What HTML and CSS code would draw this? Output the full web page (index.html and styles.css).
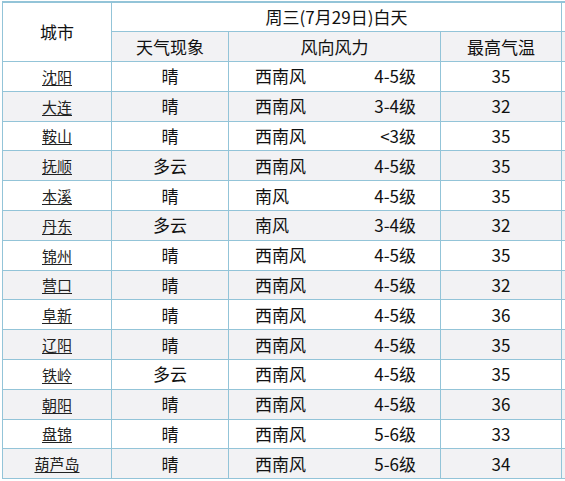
FILE: index.html
```html
<!DOCTYPE html>
<html lang="zh">
<head>
<meta charset="utf-8">
<title>天气</title>
<link rel="stylesheet" href="styles.css">
</head>
<body>
<table class="wx">
  <colgroup>
    <col class="c-city"><col class="c-sky"><col class="c-wind"><col class="c-temp"><col class="c-more">
  </colgroup>
  <thead>
    <tr class="h1">
      <th rowspan="2" class="city-h">城市</th>
      <th colspan="3">周三(7月29日)白天</th>
      <th class="more"></th>
    </tr>
    <tr class="h2">
      <th>天气现象</th>
      <th>风向风力</th>
      <th>最高气温</th>
      <th class="more"></th>
    </tr>
  </thead>
  <tbody>
    <tr><td><a class="city" href="#">沈阳</a></td><td>晴</td><td class="wind"><span>西南风</span><span>4-5级</span></td><td>35</td><td class="more"></td></tr>
    <tr><td><a class="city" href="#">大连</a></td><td>晴</td><td class="wind"><span>西南风</span><span>3-4级</span></td><td>32</td><td class="more"></td></tr>
    <tr><td><a class="city" href="#">鞍山</a></td><td>晴</td><td class="wind"><span>西南风</span><span>&lt;3级</span></td><td>35</td><td class="more"></td></tr>
    <tr><td><a class="city" href="#">抚顺</a></td><td>多云</td><td class="wind"><span>西南风</span><span>4-5级</span></td><td>35</td><td class="more"></td></tr>
    <tr><td><a class="city" href="#">本溪</a></td><td>晴</td><td class="wind"><span>南风</span><span>4-5级</span></td><td>35</td><td class="more"></td></tr>
    <tr><td><a class="city" href="#">丹东</a></td><td>多云</td><td class="wind"><span>南风</span><span>3-4级</span></td><td>32</td><td class="more"></td></tr>
    <tr><td><a class="city" href="#">锦州</a></td><td>晴</td><td class="wind"><span>西南风</span><span>4-5级</span></td><td>35</td><td class="more"></td></tr>
    <tr><td><a class="city" href="#">营口</a></td><td>晴</td><td class="wind"><span>西南风</span><span>4-5级</span></td><td>32</td><td class="more"></td></tr>
    <tr><td><a class="city" href="#">阜新</a></td><td>晴</td><td class="wind"><span>西南风</span><span>4-5级</span></td><td>36</td><td class="more"></td></tr>
    <tr><td><a class="city" href="#">辽阳</a></td><td>晴</td><td class="wind"><span>西南风</span><span>4-5级</span></td><td>35</td><td class="more"></td></tr>
    <tr><td><a class="city" href="#">铁岭</a></td><td>多云</td><td class="wind"><span>西南风</span><span>4-5级</span></td><td>35</td><td class="more"></td></tr>
    <tr><td><a class="city" href="#">朝阳</a></td><td>晴</td><td class="wind"><span>西南风</span><span>4-5级</span></td><td>36</td><td class="more"></td></tr>
    <tr><td><a class="city" href="#">盘锦</a></td><td>晴</td><td class="wind"><span>西南风</span><span>5-6级</span></td><td>33</td><td class="more"></td></tr>
    <tr><td><a class="city" href="#">葫芦岛</a></td><td>晴</td><td class="wind"><span>西南风</span><span>5-6级</span></td><td>34</td><td class="more"></td></tr>
  </tbody>
</table>
</body>
</html>
```

FILE: styles.css
```css
html, body {
  margin: 0;
  padding: 0;
  background: #fff;
  overflow: hidden;
}
body {
  font-family: "Noto Sans CJK SC", "Noto Sans", sans-serif;
  color: #111;
}
.wx {
  border-collapse: collapse;
  table-layout: fixed;
  width: 563px;
  margin: 1px 0 0 2px;
  border-top: 2px solid #93c4d8;
}
.c-city { width: 109px; }
.c-sky { width: 117px; }
.c-wind { width: 212px; }
.c-temp { width: 121px; }
.c-more { width: 4px; }
.wx th, .wx td {
  border: 1px solid #93c4d8;
  padding: 0;
  text-align: center;
  font-weight: normal;
  font-size: 17px;
  line-height: 20px;
}
.wx th.more, .wx td.more { border-right: none; }
.h1 th { height: 28px; background: #fff; }
.h2 th { height: 29px; background: #f2f2f4; }
.city-h { background: #fff; }
.wx tbody tr { height: 29.8px; }
.wx tbody tr:nth-child(even) td { background: #f2f2f4; }
.wx tbody tr:nth-child(odd) td { background: #fff; }
.city {
  color: #222;
  font-size: 15px;
  text-decoration: underline;
  text-underline-offset: 2px;
}
.wind span {
  display: inline-block;
}
.wx td.wind {
  text-align: left;
  padding: 0 24px 0 26px;
}
.wind span:first-child { float: left; }
.wind span:last-child { float: right; }
.wind::after { content: ""; display: block; clear: both; }
```
